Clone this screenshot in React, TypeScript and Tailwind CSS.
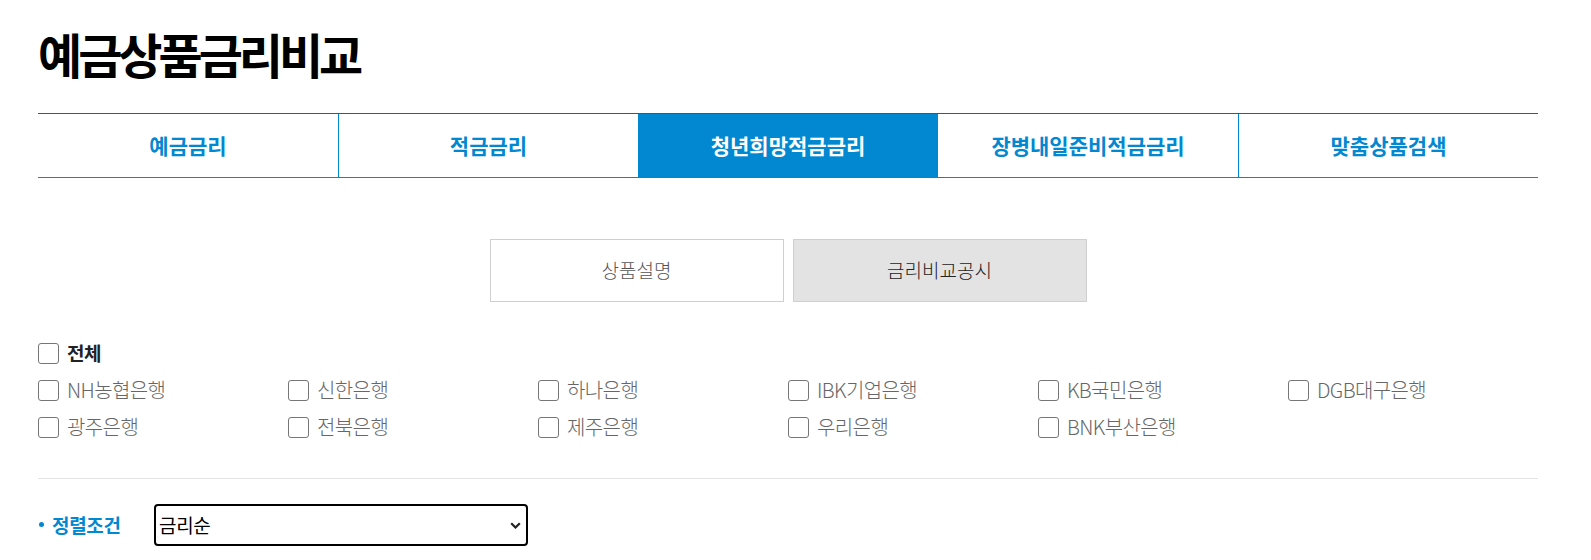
import React from 'react';

const tabs = ['예금금리', '적금금리', '청년희망적금금리', '장병내일준비적금금리', '맞춤상품검색'];
const banks = [
  'NH농협은행', '신한은행', '하나은행', 'IBK기업은행', 'KB국민은행', 'DGB대구은행',
  '광주은행', '전북은행', '제주은행', '우리은행', 'BNK부산은행',
];

function Box() {
  return <span className="w-[21px] h-[21px] shrink-0 border-[1.5px] border-[#767676] rounded-[3px] bg-white" />;
}

export default function App() {
  return (
    <div className="bg-white min-h-[560px] w-[1591px] font-['Noto_Sans_CJK_KR','Noto_Sans',sans-serif]">
      <div className="ml-[38px] w-[1500px]">
        <h1 className="pt-[25px] text-[48px] leading-[57px] font-bold tracking-[-4px] text-black">예금상품금리비교</h1>

        <div className="mt-[31px] grid grid-cols-5 border-t border-t-[#1a5f9e] border-b border-b-[#0288d1]">
          {tabs.map((t, i) => (
            <div
              key={t}
              className={
                i === 2
                  ? 'h-[63px] flex items-center justify-center bg-[#0288d1] text-white text-[21px] font-bold'
                  : 'h-[63px] flex items-center justify-center text-[#0288d1] text-[21px] font-bold' +
                    (i > 0 && i !== 3 ? ' border-l border-l-[#0288d1]' : '')
              }
            >
              {t}
            </div>
          ))}
        </div>

        <div className="mt-[61px] flex justify-center gap-[9px]">
          <div className="w-[294px] h-[63px] border border-[#cfcfcf] flex items-center justify-center text-[19px] font-light text-[#555]">
            상품설명
          </div>
          <div className="w-[294px] h-[63px] border border-[#cfcfcf] bg-[#e3e3e3] flex items-center justify-center text-[19px] font-light text-[#222]">
            금리비교공시
          </div>
        </div>

        <div className="mt-[39px] flex items-center gap-[8px] h-[24px]">
          <Box />
          <span className="text-[19px] font-bold text-[#222] tracking-[-0.5px]">전체</span>
        </div>

        <div className="mt-[13px] grid grid-cols-6 gap-y-[13px]">
          {banks.map((b) => (
            <div key={b} className="flex items-center gap-[8px] h-[24px]">
              <Box />
              <span className="text-[20px] font-light text-[#666] tracking-[-0.6px]">{b}</span>
            </div>
          ))}
        </div>

        <div className="mt-[39px] border-t border-[#e3e3e3]" />

        <div className="mt-[25px] flex items-center">
          <span className="w-[5px] h-[5px] rounded-full bg-[#0288d1] ml-[1px] mr-[8px] -mt-[2px]" />
          <span className="w-[102px] text-[19px] font-bold text-[#0288d1] tracking-[-0.3px]">정렬조건</span>
          <div className="relative w-[374px] h-[42px] border-2 border-black rounded-[4px] flex items-center pl-[3px]">
            <span className="text-[19px] text-black tracking-[-0.3px]">금리순</span>
            <svg className="absolute right-[5px] top-[16px]" width="11" height="7" viewBox="0 0 11 7" fill="none">
              <path d="M1.2 1.2 L5.5 5.5 L9.8 1.2" stroke="#222" strokeWidth="2.2" />
            </svg>
          </div>
        </div>
      </div>
    </div>
  );
}
